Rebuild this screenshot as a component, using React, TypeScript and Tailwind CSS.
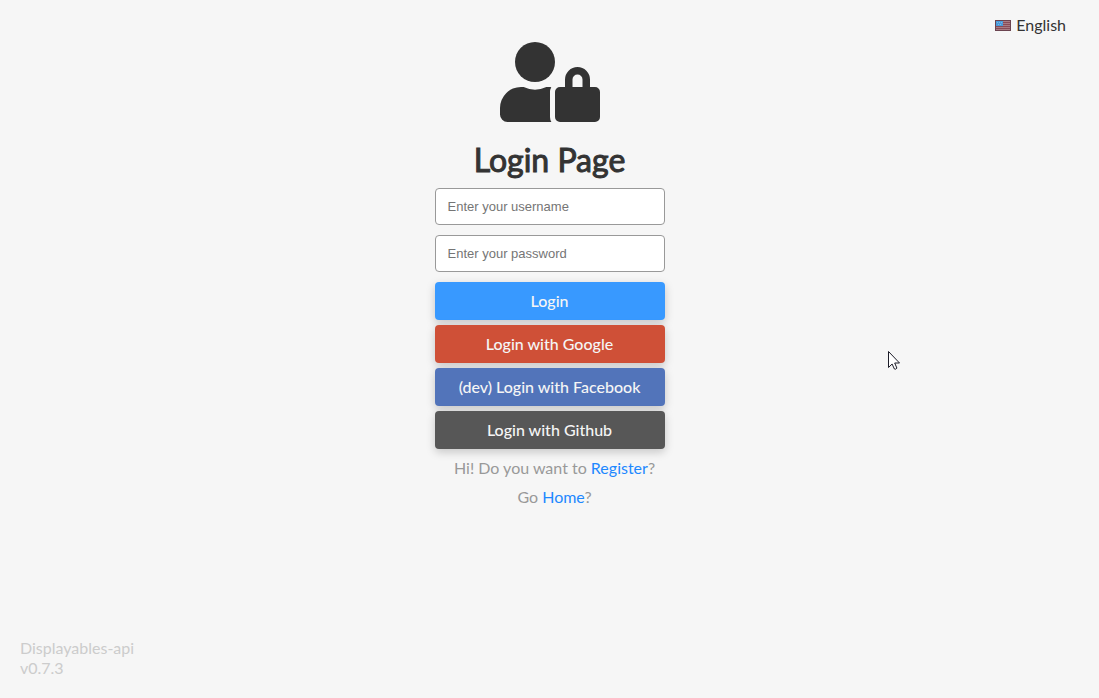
function FlagIcon() {
  return (
    <svg viewBox="0 0 16 11" className="h-[11px] w-4" aria-hidden="true">
      <rect width="16" height="11" fill="#6b4450" />
      <path d="M1 1h14v1H1zM1 3h14v1H1zM1 5h14v1H1zM1 7h14v1H1zM1 9h14v1H1z" fill="#a87c84" />
      <path d="M8 2h7v1H8zM8 4h7v1H8zM1 6h14v1H1zM1 8h14v1H1z" fill="#874c58" />
      <rect x="1" y="1" width="7" height="5" fill="#4a9bdb" />
      <path d="M2 2h1v1H2zM4 2h1v1H4zM6 2h1v1H6zM3 4h1v1H3zM5 4h1v1H5z" fill="#79b8e6" />
    </svg>
  );
}

function UserLockIcon() {
  return (
    <svg viewBox="0 0 640 512" className="h-20 w-[100px]" fill="#333333" aria-hidden="true">
      <circle cx="224" cy="128" r="128" />
      <path d="M134.4 288A134.4 134.4 0 0 0 0 422.4V464a48 48 0 0 0 48 48h280.9a63.5 63.5 0 0 1-8.9-32V320a63.1 63.1 0 0 1 8.1-30.5c-4.8-.5-9.5-1.5-14.5-1.5h-16.7a174.1 174.1 0 0 1-145.8 0z" />
      <path d="M608 288h-32v-48a80 80 0 0 0-160 0v48h-32a32 32 0 0 0-32 32v160a32 32 0 0 0 32 32h224a32 32 0 0 0 32-32V320a32 32 0 0 0-32-32zm-80 0h-64v-48a32 32 0 0 1 64 0z" />
    </svg>
  );
}

function Cursor() {
  return (
    <svg
      viewBox="0 0 12 20"
      className="pointer-events-none absolute top-[350px] left-[888px] h-5 w-3"
      aria-hidden="true"
    >
      <path
        d="M.5 1.500v16l3.600-3.500 2.300 5q1.200.8 2.500-.9L6.700 13h4.800z"
        fill="#ffffff"
        stroke="#1c1c28"
        strokeWidth="1"
      />
    </svg>
  );
}

const inputClass =
  "h-[37px] w-full rounded border border-[#999999] bg-white px-3 font-['Liberation_Sans',Arial,sans-serif] text-[13px] text-[#333333] placeholder:text-[#757575]";
const buttonClass =
  "h-[38px] w-full cursor-pointer rounded text-base text-[#f5f5f5] font-medium shadow-[0_3px_10px_rgba(0,0,0,0.2)]";

export default function App() {
  return (
    <div className="relative flex min-h-screen flex-col bg-[#f6f6f6] font-['Lato',sans-serif] text-base text-[#333333]">
      <button
        type="button"
        className="absolute top-[13px] right-[33px] flex cursor-pointer items-center gap-[5px] leading-6"
      >
        <FlagIcon />
        English
      </button>

      <main className="mx-auto flex w-[230px] grow flex-col items-center pt-[42px]">
        <UserLockIcon />
        <h1 className="mt-[18px] text-[32px] leading-10 font-normal whitespace-nowrap [-webkit-text-stroke:1px_#333333]">
          Login Page
        </h1>
        <form className="mt-2 w-full" onSubmit={(event) => event.preventDefault()}>
          <div className="flex flex-col gap-[10px]">
            <input className={inputClass} type="text" aria-label="Username" placeholder="Enter your username" />
            <input className={inputClass} type="password" aria-label="Password" placeholder="Enter your password" />
          </div>
          <div className="mt-[10px] flex flex-col gap-[5px]">
            <button type="submit" className={`${buttonClass} bg-[#3899ff]`}>
              Login
            </button>
            <button type="button" className={`${buttonClass} bg-[#cf5037]`}>
              Login with Google
            </button>
            <button type="button" className={`${buttonClass} bg-[#5274ba]`}>
              (dev) Login with Facebook
            </button>
            <button type="button" className={`${buttonClass} bg-[#575757]`}>
              Login with Github
            </button>
          </div>
        </form>
        <div className="mt-[9px] flex flex-col gap-[9px] pl-[10px] text-center leading-5 whitespace-nowrap text-[#999999]">
          <p>
            Hi! Do you want to{" "}
            <a href="#register" className="text-[#1e88ff]">
              Register
            </a>
            ?
          </p>
          <p>
            Go{" "}
            <a href="#home" className="text-[#1e88ff]">
              Home
            </a>
            ?
          </p>
        </div>
      </main>

      <footer className="px-5 pb-5 leading-5 text-[#cccccc]">
        <p>Displayables-api</p>
        <p>v0.7.3</p>
      </footer>
      <Cursor />
    </div>
  );
}
